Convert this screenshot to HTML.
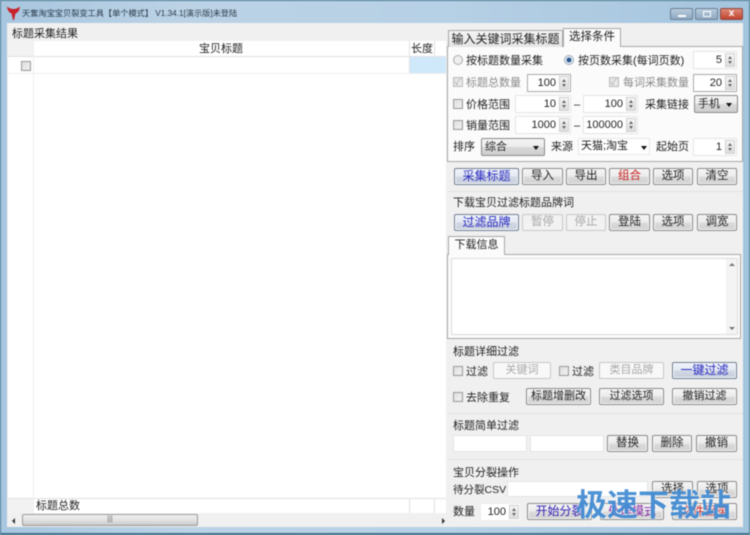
<!DOCTYPE html>
<html><head><meta charset="utf-8">
<style>
html,body{margin:0;padding:0;width:750px;height:535px;overflow:hidden;background:#b5cfe4}
#w{position:relative;width:750px;height:535px;overflow:hidden;font-family:"Liberation Sans","Noto Sans CJK SC",sans-serif;font-size:11px;color:#222;filter:blur(.4px);
background:linear-gradient(90deg,#a8c6df 0,#bcd3e6 25%,#b6d0e5 60%,#a5c5de 100%)}
#w *{box-sizing:border-box}
.a{position:absolute;white-space:nowrap}
.t{position:absolute;white-space:nowrap;height:16px;line-height:16px;margin-top:1px}
.g{color:#8a8a8a}
.btn{position:absolute;white-space:nowrap;text-align:center;border:1px solid #8a8a8a;border-radius:2px;background:linear-gradient(#f4f4f4 0,#ececec 48%,#dcdcdc 52%,#cfcfcf 100%);height:17px;line-height:15px;box-shadow:inset 0 0 0 1px #f8f8f8;font-size:11.500px}
.dis{border-color:#c8c8c8;background:#f2f2f2;color:#a8a8a8;box-shadow:none}
.blue{color:#2a2ac0;border-color:#6f7f95;background:linear-gradient(#eef3fa 0,#e4e9f2 48%,#d2d8e4 52%,#c6cedc 100%);font-size:12px}
.spin{position:absolute;background:#fff;border:1px solid #e4e6e8;height:18px;line-height:16px;text-align:right;padding-right:14px}
.spin i{position:absolute;right:1px;top:1px;width:10px;bottom:1px;background:linear-gradient(#f6f6f6,#dedede);border:1px solid #cfcfcf}
.spin i:before{content:"";position:absolute;left:2px;top:2px;border:2px solid transparent;border-top:0;border-bottom:3px solid #666}
.spin i:after{content:"";position:absolute;left:2px;bottom:2px;border:2px solid transparent;border-bottom:0;border-top:3px solid #666}
.cb{position:absolute;width:10px;height:10px;border:1px solid #9a9a9a;background:linear-gradient(135deg,#ddd,#f4f4f4);box-shadow:inset 0 0 0 1px #e4e4e4}
.cb.c{border-color:#bbb;color:#aaa;font-size:9px;line-height:8px;text-align:center}
.sel{position:absolute;border:1px solid #8a8a8a;border-radius:2px;background:linear-gradient(#f4f4f4,#ececec 48%,#d8d8d8 52%,#cfcfcf);height:18px;line-height:16px;padding-left:3px}
.sel:after{content:"";position:absolute;right:5px;top:7px;border:3px solid transparent;border-top:4px solid #111;border-bottom:0}
.inp{position:absolute;background:#fff;border:1px solid #e2e4e6}
.ln{position:absolute;background:#e1e1e1}
</style></head><body>
<div id="w">
<div class="a" style="left:0;top:0;width:750px;height:1px;background:#4a7a90"></div>
<div class="a" style="left:0;top:533px;width:750px;height:2px;background:#3d7088"></div>
<div class="a" style="left:0;top:0;width:1px;height:535px;background:#4a7a90"></div>
<div class="a" style="left:749px;top:0;width:1px;height:535px;background:#4a7a90"></div>

<svg class="a" style="left:7px;top:6px" width="13" height="14" viewBox="0 0 13 14"><path d="M0 0.500 Q3 3 6.500 3 Q10 3 13 0.500 Q12.500 6 8.500 7.500 L7 14 L6 14 L4.500 7.500 Q0.500 6 0 0.500Z" fill="#c8222a"/></svg>
<div class="a" style="left:22px;top:7px;font-size:8.200px;line-height:14px;color:#2a3a48">天奮淘宝宝贝裂变工具【单个模式】 V1.34.1[演示版]未登陆</div>

<div class="a" style="left:670px;top:8px;width:23px;height:12px;border:1px solid #6c8199;border-radius:2px;background:linear-gradient(#b8cbdc,#8ea9c2)"><div class="a" style="left:7px;top:6px;width:8px;height:2px;background:#fff"></div></div>
<div class="a" style="left:695px;top:8px;width:23px;height:12px;border:1px solid #6c8199;border-radius:2px;background:linear-gradient(#b8cbdc,#8ea9c2)"><div class="a" style="left:7px;top:2px;width:8px;height:6px;border:1px solid #fff"></div></div>
<div class="a" style="left:720px;top:8px;width:23px;height:12px;border:1px solid #8a4a40;border-radius:2px;background:linear-gradient(#de8a78,#c2442f);color:#fff;font-size:10px;font-weight:bold;line-height:9px;text-align:center">x</div>

<div class="a" style="left:7px;top:23px;width:736px;height:504px;background:#f0f0f0"></div>

<div class="t" style="left:12px;top:25px">标题采集结果</div>

<div class="a" style="left:8px;top:41px;width:438px;height:472px;background:#fff"></div>
<div class="a" style="left:8px;top:41px;width:26px;height:16px;background:#f2f2f2"></div>
<div class="a" style="left:8px;top:498px;width:26px;height:15px;background:#f2f2f2"></div>
<div class="ln" style="left:8px;top:56px;width:438px;height:1px"></div>
<div class="ln" style="left:8px;top:73px;width:438px;height:1px;background:#eee"></div>
<div class="ln" style="left:8px;top:498px;width:438px;height:1px"></div>
<div class="ln" style="left:33px;top:41px;width:1px;height:472px;background:#eee"></div>
<div class="ln" style="left:409px;top:41px;width:1px;height:33px"></div>
<div class="ln" style="left:434px;top:41px;width:1px;height:33px"></div>
<div class="ln" style="left:409px;top:498px;width:1px;height:15px"></div>
<div class="ln" style="left:434px;top:498px;width:1px;height:15px"></div>
<div class="a" style="left:410px;top:57px;width:36px;height:16px;background:#cfe8fa"></div>
<div class="t" style="left:199px;top:40px">宝贝标题</div>
<div class="t" style="left:411px;top:40px">长度</div>
<div class="cb" style="left:21px;top:61px"></div>
<div class="t" style="left:36px;top:497px">标题总数</div>

<div class="a" style="left:8px;top:513px;width:438px;height:14px;background:#f0f0f0"></div>
<div class="a" style="left:12px;top:518px;border:3px solid transparent;border-right:3px solid #333;border-left:0"></div>
<div class="a" style="left:442px;top:518px;border:3px solid transparent;border-left:3px solid #333;border-right:0"></div>
<div class="a" style="left:22px;top:514px;width:176px;height:12px;border:1px solid #9a9a9a;border-radius:2px;background:linear-gradient(#f0f0f0,#e2e2e2 50%,#cacaca);font-size:7px;line-height:9px;text-align:center;color:#666">|||</div>

<!-- tabs -->
<div class="a" style="left:447px;top:46px;width:296px;height:116px;background:#fbfbfb;border:1px solid #a8a8a8"></div>
<div class="a" style="left:448px;top:30px;width:115px;height:17px;background:linear-gradient(#f4f4f4,#e4e4e4);border:1px solid #a8a8a8;border-bottom:0;line-height:17px;text-align:center;font-size:12px">输入关键词采集标题</div>
<div class="a" style="left:563px;top:28px;width:58px;height:19px;background:#fbfbfb;border:1px solid #a8a8a8;border-bottom:0;line-height:17px;text-align:center;font-size:11.500px">选择条件</div>

<svg class="a" style="left:452px;top:54px" width="12" height="12"><circle cx="6" cy="6" r="4.500" fill="#eee" stroke="#aaa"/></svg>
<svg class="a" style="left:563px;top:54px" width="12" height="12"><circle cx="6" cy="6" r="4.500" fill="#e6eef6" stroke="#9ab"/><circle cx="6" cy="6" r="2.500" fill="#2a5a90"/></svg>
<div class="t" style="left:466px;top:52px">按标题数量采集</div>
<div class="t" style="left:578px;top:52px">按页数采集(每词页数)</div>
<div class="spin" style="left:693px;top:51px;width:44px">5<i></i></div>

<div class="cb c" style="left:453px;top:77px">✓</div>
<div class="t g" style="left:466px;top:74px">标题总数量</div>
<div class="spin" style="left:527px;top:74px;width:44px;border-color:#aaa">100<i></i></div>
<div class="cb c" style="left:609px;top:77px">✓</div>
<div class="t g" style="left:623px;top:74px">每词采集数量</div>
<div class="spin" style="left:693px;top:74px;width:44px;border-color:#aaa">20<i></i></div>

<div class="cb" style="left:453px;top:99px"></div>
<div class="t" style="left:466px;top:96px">价格范围</div>
<div class="spin" style="left:515px;top:95px;width:56px">10<i></i></div>
<div class="t" style="left:574px;top:96px">–</div>
<div class="spin" style="left:583px;top:95px;width:55px">100<i></i></div>
<div class="t" style="left:645px;top:96px">采集链接</div>
<div class="sel" style="left:694px;top:95px;width:44px">手机</div>

<div class="cb" style="left:453px;top:120px"></div>
<div class="t" style="left:466px;top:117px">销量范围</div>
<div class="spin" style="left:515px;top:116px;width:56px">1000<i></i></div>
<div class="t" style="left:574px;top:117px">–</div>
<div class="spin" style="left:583px;top:116px;width:55px">100000<i></i></div>

<div class="t" style="left:453px;top:138px">排序</div>
<div class="sel" style="left:481px;top:138px;width:64px">综合</div>
<div class="t" style="left:551px;top:138px">来源</div>
<div class="a" style="left:578px;top:138px;width:72px;height:17px;background:#fff;border:1px solid #e8e8e8;line-height:15px;padding-left:2px">天猫;淘宝<span class="a" style="left:62px;top:7px;border:3px solid transparent;border-top:4px solid #111;border-bottom:0"></span></div>
<div class="t" style="left:656px;top:138px">起始页</div>
<div class="spin" style="left:693px;top:138px;width:44px">1<i></i></div>

<!-- buttons 1 -->
<div class="btn blue" style="left:454px;top:168px;width:65px">采集标题</div>
<div class="btn" style="left:522px;top:168px;width:41px">导入</div>
<div class="btn" style="left:566px;top:168px;width:40px">导出</div>
<div class="btn" style="left:609px;top:168px;width:41px;color:#c82020">组合</div>
<div class="btn" style="left:653px;top:168px;width:40px">选项</div>
<div class="btn" style="left:697px;top:168px;width:40px">清空</div>
<div class="a" style="left:447px;top:191px;width:296px;height:1px;background:#e2e2e2"></div>

<div class="t" style="left:453px;top:194px">下载宝贝过滤标题品牌词</div>
<div class="btn blue" style="left:454px;top:214px;width:65px">过滤品牌</div>
<div class="btn dis" style="left:522px;top:214px;width:41px">暂停</div>
<div class="btn dis" style="left:566px;top:214px;width:40px">停止</div>
<div class="btn" style="left:609px;top:214px;width:41px">登陆</div>
<div class="btn" style="left:653px;top:214px;width:40px">选项</div>
<div class="btn" style="left:697px;top:214px;width:40px">调宽</div>

<div class="a" style="left:447px;top:254px;width:294px;height:85px;background:#fbfbfb;border:1px solid #a8a8a8"></div>
<div class="a" style="left:448px;top:236px;width:57px;height:19px;background:#fbfbfb;border:1px solid #a8a8a8;border-bottom:0;line-height:17px;text-align:center">下载信息</div>
<div class="a" style="left:451px;top:258px;width:287px;height:77px;background:#fff;border:1px solid #ddd"></div>
<div class="a" style="left:726px;top:259px;width:11px;height:75px;background:#f4f4f4"></div>
<div class="a" style="left:729px;top:263px;border:3px solid transparent;border-bottom:3px solid #777;border-top:0"></div>
<div class="a" style="left:729px;top:327px;border:3px solid transparent;border-top:3px solid #777;border-bottom:0"></div>

<div class="t" style="left:453px;top:343px">标题详细过滤</div>
<div class="cb" style="left:453px;top:366px"></div>
<div class="t" style="left:466px;top:363px">过滤</div>
<div class="btn dis" style="left:493px;top:362px;width:58px;background:#f8f8f8;font-size:11px">关键词</div>
<div class="cb" style="left:559px;top:366px"></div>
<div class="t" style="left:572px;top:363px">过滤</div>
<div class="btn dis" style="left:599px;top:362px;width:65px;background:#f8f8f8;font-size:11px">类目品牌</div>
<div class="btn blue" style="left:672px;top:362px;width:65px">一键过滤</div>

<div class="cb" style="left:453px;top:392px"></div>
<div class="t" style="left:466px;top:389px">去除重复</div>
<div class="btn" style="left:526px;top:388px;width:65px;font-size:11px">标题增删改</div>
<div class="btn" style="left:599px;top:388px;width:65px;font-size:11px">过滤选项</div>
<div class="btn" style="left:672px;top:388px;width:65px;font-size:11px">撤销过滤</div>
<div class="a" style="left:447px;top:413px;width:296px;height:1px;background:#e2e2e2"></div>

<div class="t" style="left:453px;top:417px">标题简单过滤</div>
<div class="inp" style="left:453px;top:435px;width:74px;height:17px"></div>
<div class="inp" style="left:530px;top:435px;width:74px;height:17px"></div>
<div class="btn" style="left:607px;top:435px;width:41px">替换</div>
<div class="btn" style="left:652px;top:435px;width:40px">删除</div>
<div class="btn" style="left:696px;top:435px;width:41px">撤销</div>
<div class="a" style="left:447px;top:459px;width:296px;height:1px;background:#e2e2e2"></div>

<div class="t" style="left:453px;top:464px">宝贝分裂操作</div>
<div class="t" style="left:453px;top:481px;font-size:10.500px">待分裂CSV</div>
<div class="inp" style="left:507px;top:481px;width:141px;height:16px"></div>
<div class="btn" style="left:652px;top:481px;width:41px">选择</div>
<div class="btn" style="left:697px;top:481px;width:40px">选项</div>

<div class="t" style="left:453px;top:503px">数量</div>
<div class="spin" style="left:480px;top:503px;width:41px;border-color:#eee">100<i></i></div>
<div class="btn" style="left:527px;top:503px;width:65px;color:#3020b0;font-size:12px">开始分裂</div>
<div class="btn" style="left:600px;top:503px;width:64px;color:#8020a0;font-size:12px">处理模式</div>
<div class="btn" style="left:672px;top:503px;width:65px;color:#c82020;font-size:12px">文件目录</div>

<div class="a" style="left:576px;top:488px;font-size:31px;line-height:36px;font-weight:bold;color:#3f8ad2;opacity:.92;text-shadow:0 0 2px #fff">极速下载站</div>
</div>
</body></html>
